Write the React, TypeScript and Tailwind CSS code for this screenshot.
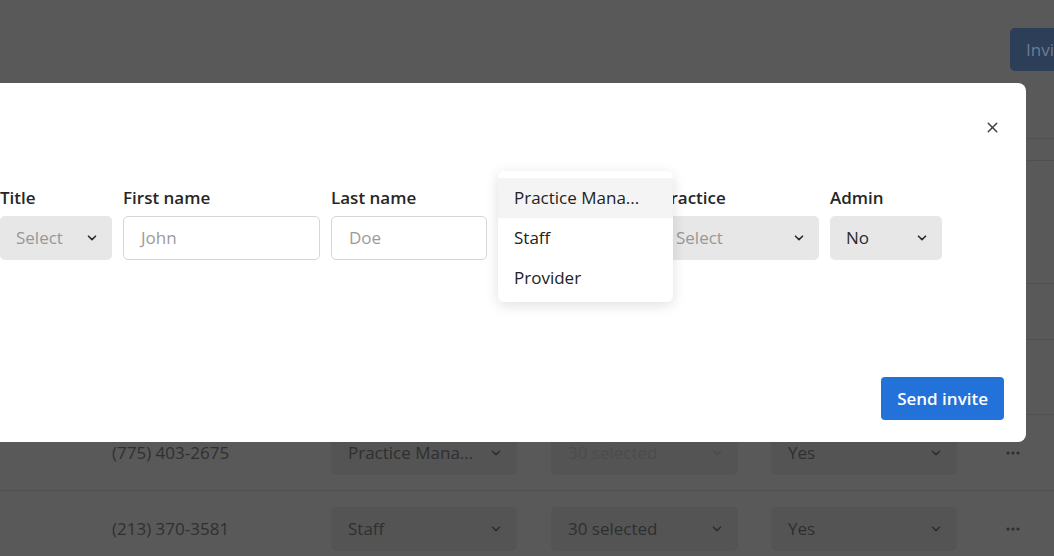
import { X } from 'lucide-react';

const font = { fontFamily: '"Open Sans", "Noto Sans", sans-serif' };

function Chevron({ className = 'text-[#333333]' }: { className?: string }) {
  return (
    <svg width="10" height="6" viewBox="0 0 10 6" fill="none" className={className}>
      <path d="M1.5 1.2L5 4.6l3.5-3.4" stroke="currentColor" strokeWidth="1.6" strokeLinecap="round" strokeLinejoin="round" />
    </svg>
  );
}

function Dots() {
  return (
    <svg width="14" height="4" viewBox="0 0 14 4" className="text-[#2f2f2f]">
      <circle cx="2" cy="2" r="1.6" fill="currentColor" />
      <circle cx="7" cy="2" r="1.6" fill="currentColor" />
      <circle cx="12" cy="2" r="1.6" fill="currentColor" />
    </svg>
  );
}

const rows = [
  { h: 'h-[22px]', phone: '', role: '', practice: '', admin: '', faded: false },
  { h: 'h-[123px]', phone: '', role: '', practice: '', admin: '', faded: false },
  { h: 'h-[56px]', phone: '', role: '', practice: '', admin: '', faded: false },
  { h: 'h-[75px]', phone: '(310) 555-0142', role: 'Provider', practice: '30 selected', admin: 'No', faded: false },
  { h: 'h-[76px]', phone: '(775) 403-2675', role: 'Practice Mana...', practice: '30 selected', admin: 'Yes', faded: true },
  { h: 'h-[76px]', phone: '(213) 370-3581', role: 'Staff', practice: '30 selected', admin: 'Yes', faded: false },
];

function DimSelect({ value, width, faded }: { value: string; width: string; faded?: boolean }) {
  return (
    <div className={`${width} h-[44px] rounded-[5px] bg-[#545454] flex items-center justify-between pl-[17px] pr-[16px]`}>
      <span className={faded ? 'text-[#4c4c4c]' : 'text-[#2f2f2f]'}>{value}</span>
      <Chevron className={faded ? 'text-[#4c4c4c]' : 'text-[#2f2f2f]'} />
    </div>
  );
}

function Background() {
  return (
    <div className="w-full h-[556px] bg-[#595959] overflow-hidden text-[17px]" style={font}>
      <div className="flex justify-end pt-[28px] h-[138px]">
        <div className="w-[80px] -mr-[36px] h-[43px] rounded-[5px] bg-[#2c3e58] text-[#6b7d96] flex items-center pl-[16px] whitespace-nowrap">
          Invite
        </div>
      </div>
      <div className="border-t border-[#505050]">
        {rows.map((r, i) => (
          <div key={i} className={`${r.h} border-b border-[#505050] flex items-center`}>
            {r.phone && (
              <>
                <span className="ml-[112px] w-[219px] text-[#303030]">{r.phone}</span>
                <DimSelect value={r.role} width="w-[186px]" />
                <div className="w-[34px]" />
                <DimSelect value={r.practice} width="w-[187px]" faded={r.faded} />
                <div className="w-[33px]" />
                <DimSelect value={r.admin} width="w-[186px]" />
                <span className="ml-[49px] flex items-center">
                  <Dots />
                </span>
              </>
            )}
          </div>
        ))}
      </div>
    </div>
  );
}

function Label({ children }: { children: React.ReactNode }) {
  return <div className="h-[24px] leading-[24px] font-semibold text-[#262626] mb-[6px]">{children}</div>;
}

function GraySelect({ value, width, placeholder }: { value: string; width: string; placeholder?: boolean }) {
  return (
    <div className={`${width} h-[44px] rounded-[5px] bg-[#e7e7e7] flex items-center justify-between pl-[16px] pr-[15px]`}>
      <span className={placeholder ? 'text-[#979797]' : 'text-[#2b2b2b]'}>{value}</span>
      <Chevron className="text-[#2b2b2b]" />
    </div>
  );
}

function TextInput({ placeholder, width }: { placeholder: string; width: string }) {
  return (
    <div className={`${width} h-[44px] rounded-[5px] border border-[#d6d6d6] bg-white flex items-center pl-[17px] text-[#9b9b9b]`}>
      {placeholder}
    </div>
  );
}

function Modal() {
  return (
    <div
      className="absolute left-[-22px] top-[83px] w-[1048px] h-[359px] bg-white rounded-[8px] flex flex-col px-[22px] pt-[22px] pb-[22px] text-[17px]"
      style={font}
    >
      <div className="h-[44px] flex items-center justify-end">
        <button className="w-6 h-6 flex items-center justify-center text-[#3a3a3a]">
          <X size={17} strokeWidth={2} />
        </button>
      </div>

      <div className="mt-[37px] flex gap-[11px]">
        <div>
          <Label>Title</Label>
          <GraySelect value="Select" width="w-[112px]" placeholder />
        </div>
        <div>
          <Label>First name</Label>
          <TextInput placeholder="John" width="w-[197px]" />
        </div>
        <div>
          <Label>Last name</Label>
          <TextInput placeholder="Doe" width="w-[156px]" />
        </div>
        <div className="relative">
          <div className="h-[24px] mb-[6px]" />
          <div className="w-[151px] h-[44px] rounded-[5px] border border-[#d6d6d6] bg-white" />
          <div className="absolute left-0 top-[-15px] w-[175px] bg-white rounded-[6px] shadow-[0_3px_14px_rgba(0,0,0,0.13)] pt-[7px] pb-[4px] z-10">
            <div className="h-[40px] flex items-center pl-[16px] bg-[#f4f4f4] text-[#222222]">Practice Mana...</div>
            <div className="h-[40px] flex items-center pl-[16px] text-[#222222]">Staff</div>
            <div className="h-[40px] flex items-center pl-[16px] text-[#222222]">Provider</div>
          </div>
        </div>
        <div>
          <Label>Practice</Label>
          <GraySelect value="Select" width="w-[159px]" placeholder />
        </div>
        <div>
          <Label>Admin</Label>
          <GraySelect value="No" width="w-[112px]" />
        </div>
      </div>

      <div className="mt-auto flex justify-end">
        <button className="h-[43px] px-[16px] rounded-[4px] bg-[#2272d9] text-white font-semibold">
          Send invite
        </button>
      </div>
    </div>
  );
}

export default function App() {
  return (
    <div className="relative w-full h-[556px] overflow-hidden">
      <Background />
      <Modal />
    </div>
  );
}
